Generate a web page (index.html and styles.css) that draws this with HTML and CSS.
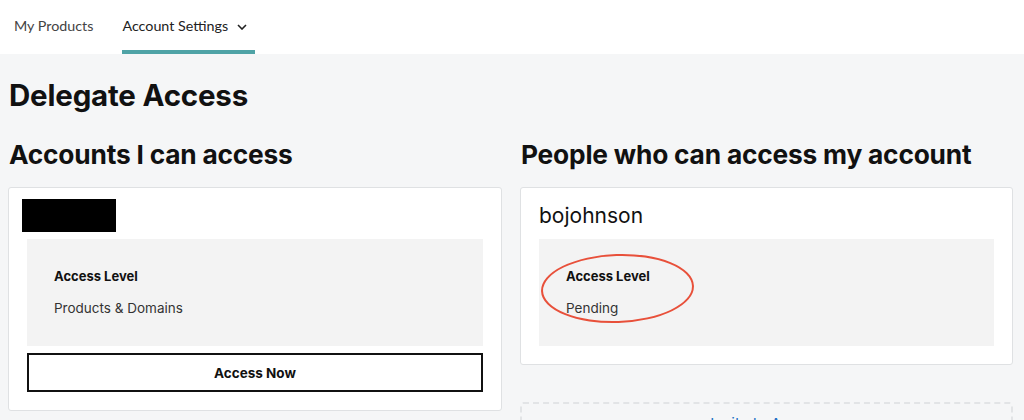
FILE: index.html
```html
<!DOCTYPE html>
<html>
<head>
<meta charset="utf-8">
<link rel="stylesheet" href="styles.css">
</head>
<body>
<nav class="topnav">
  <a class="nav-item">My Products</a>
  <a class="nav-item active">Account Settings
    <svg class="chev" width="10" height="6" viewBox="0 0 10 6"><path d="M1 1l4 4 4-4" fill="none" stroke="#222" stroke-width="1.6"/></svg>
  </a>
</nav>
<main class="page">
  <h1 class="page-title">Delegate Access</h1>
  <div class="columns">
    <section class="col">
      <h2 class="col-title">Accounts I can access</h2>
      <div class="card">
        <div class="card-head"><span class="redact"></span></div>
        <div class="level-box">
          <div class="level-label">Access Level</div>
          <div class="level-value">Products &amp; Domains</div>
        </div>
        <button class="btn-outline">Access Now</button>
      </div>
    </section>
    <section class="col">
      <h2 class="col-title">People who can access my account</h2>
      <div class="card">
        <div class="card-head"><span class="user">bojohnson</span></div>
        <div class="level-box">
          <span class="mark"></span>
          <div class="level-label">Access Level</div>
          <div class="level-value">Pending</div>
        </div>
      </div>
      <div class="invite">Invite to Access</div>
    </section>
  </div>
</main>
</body>
</html>
```
FILE: styles.css
```css
* { box-sizing: border-box; }
html, body { margin: 0; padding: 0; }
body {
  background: #f5f6f7;
  font-family: Inter, "Noto Sans", sans-serif;
  color: #111;
  height: 420px;
  overflow: hidden;
}
.topnav {
  background: #fff;
  height: 54px;
  display: flex;
  align-items: stretch;
  padding-left: 14px;
  gap: 29px;
}
.nav-item {
  display: flex;
  align-items: center;
  font-family: Lato, "Noto Sans", sans-serif;
  font-size: 14.3px;
  color: #444;
  padding-bottom: 0;
  border-bottom: 4px solid transparent;
}
.nav-item.active {
  color: #222;
  border-bottom-color: #4fa3a6;
  padding-right: 8px;
}
.chev { margin-left: 9px; margin-top: 3px; }
.page { padding: 0 10px 0 8px; }
.page-title {
  font-size: 29.5px;
  font-weight: 700;
  margin: 0;
  padding: 23px 0 0 1px;
  line-height: 36px;
  letter-spacing: -0.2px;
}
.columns {
  display: grid;
  grid-template-columns: 494px 493px;
  gap: 18px;
  margin-top: 27px;
}
.col-title {
  font-size: 26.3px;
  font-weight: 700;
  margin: 0 0 17px 1px;
  line-height: 30px;
  letter-spacing: -0.2px;
}
.card {
  background: #fff;
  border: 1px solid #dfe1e3;
  border-radius: 3px;
  padding: 11px 18px 18px;
}
.card-head {
  height: 33px;
  margin-bottom: 7px;
  display: flex;
  align-items: center;
}
.redact {
  display: block;
  width: 94px;
  height: 33px;
  background: #000;
  margin-left: -5px;
}
.user { font-size: 21px; color: #111; }
.level-box {
  position: relative;
  background: #f3f3f3;
  padding: 27px 27px 28px;
}
.level-label { font-size: 13px; font-weight: 700; line-height: 20px; }
.level-value { font-size: 13.5px; color: #333; line-height: 20px; margin-top: 12px; }
.btn-outline {
  display: block;
  width: 100%;
  height: 39px;
  margin-top: 7px;
  background: #fff;
  border: 2px solid #111;
  font-family: inherit;
  font-size: 13.5px;
  font-weight: 700;
  color: #111;
}
.mark {
  position: absolute;
  left: 2px;
  top: 15px;
  width: 153px;
  height: 69px;
  border: 2px solid #e8503a;
  border-radius: 50%;
  transform: rotate(-2deg);
}
.invite {
  margin-top: 37px;
  border: 2px dashed #e2e4e6;
  border-radius: 3px;
  height: 60px;
  text-align: center;
  padding-top: 10px;
  font-size: 15px;
  color: #1a6fc4;
}
```
